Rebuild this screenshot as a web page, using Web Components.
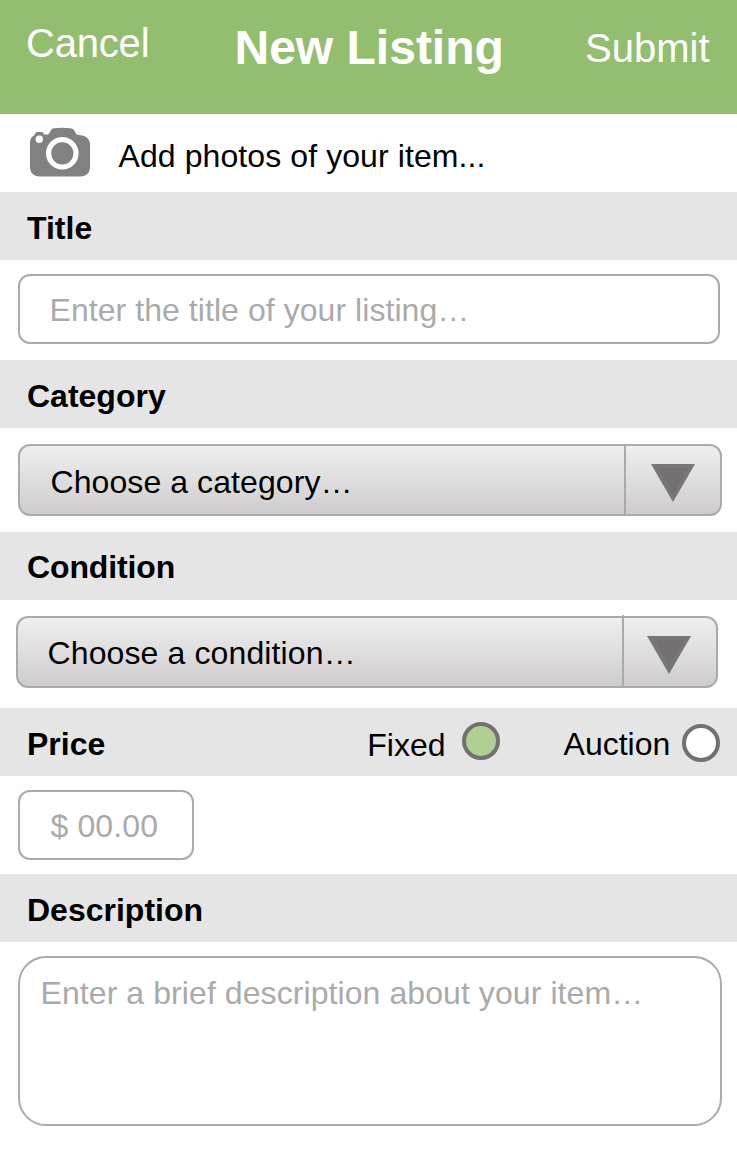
<!DOCTYPE html>
<html lang="en">
<head>
<meta charset="utf-8">
<title>New Listing</title>
<style>
html,body{margin:0;background:#fefefe}
body{font-family:"Liberation Sans",Arial,sans-serif;color:#000;width:737px;height:1149px;overflow:hidden}
</style>
</head>
<body>
<listing-page></listing-page>
<script>
const define = (name, html) => customElements.define(name, class extends HTMLElement {
  constructor() {
    super();
    const t = document.createElement('template');
    t.innerHTML = html;
    this.attachShadow({mode: 'open'}).append(t.content.cloneNode(true));
  }
});

// A single line of text: --size, --lead (line height), --track (letter spacing)
define('ui-text', `<style>
:host{display:block;white-space:pre;font-size:var(--size,32px);line-height:var(--lead,40px);letter-spacing:var(--track,0)}
</style><slot></slot>`);

define('nav-bar', `<style>
:host{display:grid;grid-template-columns:208px 351px 1fr;align-items:start;box-sizing:border-box;height:114px;padding-left:26px;background:#93be6f;color:#fff}
</style><slot></slot>`);

define('camera-icon', `<style>:host{display:block;width:62px;height:52px}svg{display:block}</style>
<svg width="62" height="52" viewBox="0 0 62 52">
<path d="M1 15Q1.500 10 5 8.500L6.500 6Q7 5 9 5H13Q14.500 5 15 7.500H19Q20.500 7 22 3Q23 1.500 25 1.200Q33 .4 41 1.200Q44 1.500 45 3L47.500 7.500Q49 8.300 52 8.300Q59 9 61 16V41Q60 49 52 49.500H10Q2 49 1 41Z" fill="#818181"/>
<circle cx="33.300" cy="26.300" r="13.700" fill="none" stroke="#fff" stroke-width="5.200"/>
<circle cx="10.300" cy="12.300" r="3.700" fill="#fff"/>
</svg>`);

define('photo-row', `<style>
:host{display:flex;height:78px;padding-left:29px;box-sizing:border-box;--track:.09px}
camera-icon{margin-top:13px}ui-text{margin:22px 0 0 27.500px}
</style><camera-icon></camera-icon><ui-text><slot></slot></ui-text>`);

define('section-bar', `<style>
:host{display:flex;align-items:flex-start;box-sizing:border-box;height:68px;background:#e5e5e5;padding:var(--pad,16px) 0 0 27px}
.label{font-weight:bold}
</style><ui-text class="label"><slot></slot></ui-text><slot name="extra"></slot>`);

define('text-field', `<style>
:host{display:block;box-sizing:border-box;width:var(--w);height:var(--h,70px);border:2px solid #aaa;border-radius:var(--r,12px);padding:var(--pad);color:#aaa;background:#fff}
</style><ui-text><slot></slot></ui-text>`);

define('select-field', `<style>
:host{display:grid;grid-template-columns:604px 1fr;box-sizing:border-box;width:702px;height:72px;border:2px solid #aaa;border-radius:12px;background:linear-gradient(#efefef,#cfcccd)}
ui-text{padding:var(--pad)}
.arrow{border-left:2px solid #aaa;margin-top:var(--rise,0);padding:var(--arrow)}
svg{display:block}
</style><ui-text><slot></slot></ui-text><div class="arrow"><svg width="44" height="38"><path d="M0 0H44L22 38Z" fill="#767776"/><path d="M7 4H37L22 29.5Z" fill="#757070"/></svg></div>`);

define('radio-option', `<style>
:host{display:flex;align-items:flex-start}
i{box-sizing:border-box;width:38px;height:38px;border:4px solid #757070;border-radius:50%;background:var(--fill,#fff);margin:var(--dot)}
</style><ui-text><slot></slot></ui-text><i></i>`);

define('listing-page', `<style>
:host{display:flex;flex-direction:column}
nav-bar ui-text{--size:40px;--lead:48px}
.cancel{margin-top:19px;--track:-.2px}.submit{margin-top:24px}
nav-bar .heading{--size:48px;--lead:56px;margin:20px 0 0 .5px;font-weight:bold}
.title{--w:702px;--pad:14px 0 0 29.5px;--track:.06px;margin:14px 0 16px 18px}
.cat{width:704px;--pad:16px 0 0 30.5px;--track:.08px;--arrow:18px 0 0 25px;margin:16px 0 16px 18px}
.cond{--pad:15px 0 0 29.5px;--track:.12px;--arrow:21px 0 0 23px;--rise:-3px;margin:16px 0 20px 16px}
.price{--w:176px;--pad:14px 0 0 30.5px;--track:.12px;margin:14px 0 14px 18px}
.desc{--w:704px;--h:170px;--r:28px;--pad:15px 0 0 20.5px;--track:.08px;margin:14px 0 0 18px}
.fixed{--fill:#afcf94;--dot:-3px 0 0 16px;margin:1px 0 0 262px}
.auction{--dot:0 0 0 11.5px;margin-left:64px}
</style>
<nav-bar><ui-text class="cancel">Cancel</ui-text><ui-text class="heading">New Listing</ui-text><ui-text class="submit">Submit</ui-text></nav-bar>
<photo-row>Add photos of your item...</photo-row>
<section-bar>Title</section-bar>
<text-field class="title">Enter the title of your listing…</text-field>
<section-bar>Category</section-bar>
<select-field class="cat">Choose a category…</select-field>
<section-bar style="--pad:15px;--track:-.12px">Condition</section-bar>
<select-field class="cond">Choose a condition…</select-field>
<section-bar>Price<radio-option slot="extra" class="fixed">Fixed</radio-option><radio-option slot="extra" class="auction">Auction</radio-option></section-bar>
<text-field class="price">$ 00.00</text-field>
<section-bar>Description</section-bar>
<text-field class="desc">Enter a brief description about your item…</text-field>`);
</script>
</body>
</html>
